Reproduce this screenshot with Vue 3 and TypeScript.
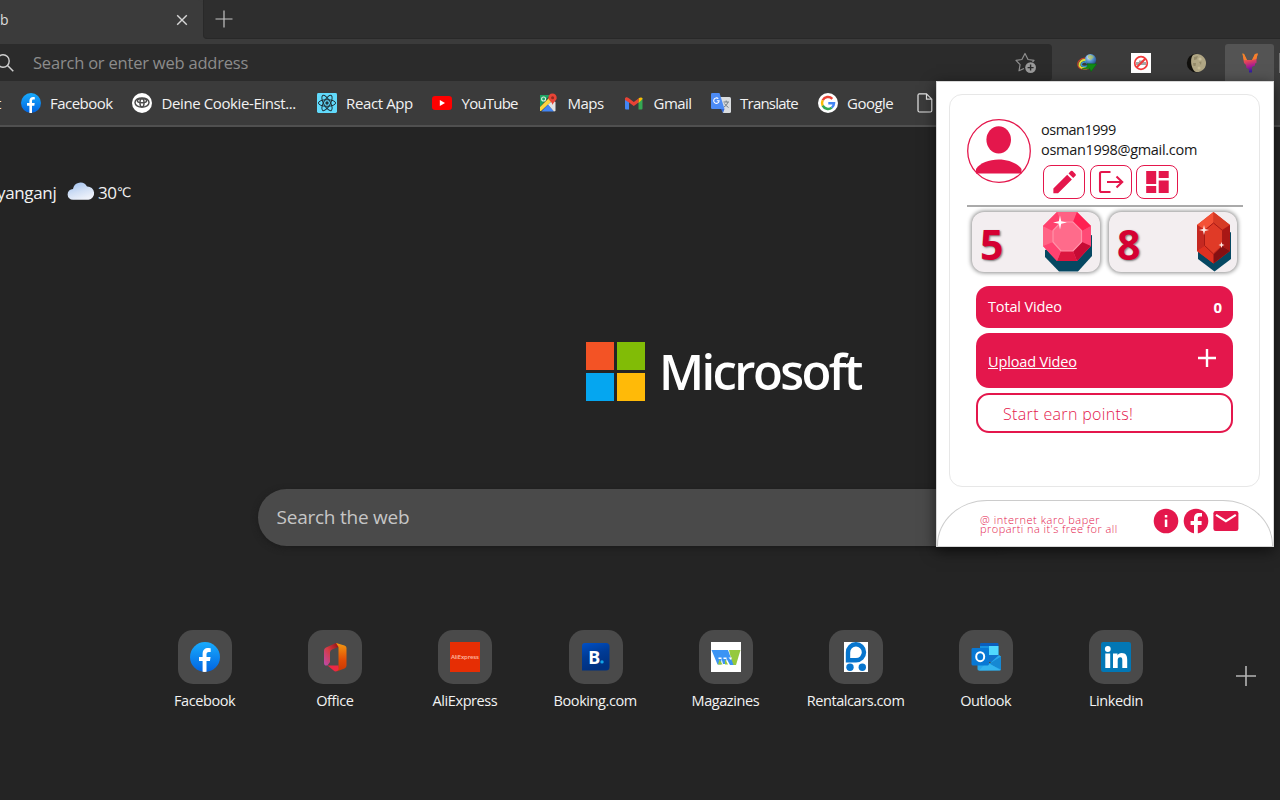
<script setup lang="ts">
interface Bookmark {
  label: string
  icon: string
}

const bookmarks: Bookmark[] = [
  { label: 'Facebook', icon: 'facebook' },
  { label: 'Deine Cookie-Einst...', icon: 'toyota' },
  { label: 'React App', icon: 'react' },
  { label: 'YouTube', icon: 'youtube' },
  { label: 'Maps', icon: 'maps' },
  { label: 'Gmail', icon: 'gmail' },
  { label: 'Translate', icon: 'translate' },
  { label: 'Google', icon: 'google' },
]

const tiles: Bookmark[] = [
  { label: 'Facebook', icon: 'facebook' },
  { label: 'Office', icon: 'office' },
  { label: 'AliExpress', icon: 'aliexpress' },
  { label: 'Booking.com', icon: 'booking' },
  { label: 'Magazines', icon: 'magazines' },
  { label: 'Rentalcars.com', icon: 'rental' },
  { label: 'Outlook', icon: 'outlook' },
  { label: 'Linkedin', icon: 'linkedin' },
]
</script>

<template>
  <div class="screen">
    <header class="browser">
      <div class="tabs">
        <div class="tab">
          <span class="tab-title">b</span>
          <svg class="close" width="12" height="12" viewBox="0 0 12 12"><path d="M1.2 1.2 10.8 10.8M10.8 1.2 1.2 10.8" stroke="#d6d6d6" stroke-width="1.4" fill="none" /></svg>
        </div>
        <div class="strip">
          <svg width="18" height="18" viewBox="0 0 18 18"><path d="M9 0.5V17.5M0.5 9H17.5" stroke="#c4c4c4" stroke-width="1.2" fill="none" /></svg>
        </div>
      </div>
      <div class="toolbar">
        <div class="address">
          <svg class="loupe" width="18" height="20" viewBox="0 0 18 20"><circle cx="7" cy="8" r="6.2" fill="none" stroke="#d0d0d0" stroke-width="1.4" /><path d="M11.5 12.5 17.3 18.2" stroke="#d0d0d0" stroke-width="1.5" /></svg>
          <span class="address-text">Search or enter web address</span>
          <svg class="star" width="22" height="22" viewBox="0 0 22 22"><path d="M9 16.5 4 18.8 5.1 12.6 1 8.4 6.9 7.5 10 1.5 13 7.5 19 8.4 17.5 10" fill="none" stroke="#8f8f8f" stroke-width="1.2" stroke-linejoin="round" /><circle cx="15.6" cy="15.6" r="5.4" fill="#9a9a9a" /><path d="M15.6 12.6V18.6M12.6 15.6H18.6" stroke="#2b2b2b" stroke-width="1.4" /></svg>
        </div>
        <div class="extensions">
          <div class="ext">
            <svg width="20" height="20" viewBox="0 0 20 20">
              <defs><radialGradient id="globe" cx=".4" cy=".3" r=".8"><stop offset="0" stop-color="#e9f6ff" /><stop offset=".4" stop-color="#5a97d4" /><stop offset="1" stop-color="#153b77" /></radialGradient></defs>
              <circle cx="13.4" cy="6.8" r="5.8" fill="url(#globe)" />
              <path d="M11 2.5Q15 1 17 4L14 7 11 5Z" fill="#a9bd57" opacity=".7" />
              <path d="M8 5.2C3 5.500 0 9 1 12.500 2 16 7 17 12 15.500" fill="none" stroke="#c7412a" stroke-width="1.2" />
              <path d="M8.500 6.8C4.5 7 2 9.500 2.500 12.500 3.5 15 7 16 12 14.5" fill="none" stroke="#d8e03a" stroke-width="2" />
              <path d="M9 8.8C5 9 3.800 10.800 4.600 12.5 6 14 9 13.500 12 12.500" fill="none" stroke="#3a9ad0" stroke-width="1.4" />
              <path d="M10 10.800 19.800 11 14.2 18.500 12.5 15.500 5 16Q9.500 15 10.800 13Z" fill="#118a15" stroke="#0a6a10" stroke-width=".6" />
            </svg>
          </div>
          <div class="ext">
            <svg width="20" height="20" viewBox="0 0 20 20"><path d="M0 0H20V20H0Z" fill="#fff" /><path d="M5 9H8V7.500H13V9H15V12H5Z" fill="#a5a5a5" /><circle cx="10" cy="10" r="6.3" fill="none" stroke="#f13a3a" stroke-width="1.7" /><path d="M14.5 5.5 5.5 14.5" stroke="#f13a3a" stroke-width="1.9" /></svg>
          </div>
          <div class="ext">
            <svg width="20" height="20" viewBox="0 0 20 20"><circle cx="10" cy="10" r="9.2" fill="#100f0c" /><path d="M7 2A9 9 0 1 1 10 19C5 16.500 3.500 6 7 2Z" fill="#b0a684" /><path d="M8 4 12 3 10.500 6.500 8 7ZM7 10 10 10 9.500 13 7.500 13ZM13 9 15.500 8.500 15 12Z" fill="#938969" /><circle cx="14" cy="6" r="1.6" fill="#c9bf9b" /><circle cx="13" cy="15" r="1.5" fill="#c7bc97" /></svg>
          </div>
          <div class="ext selected">
            <svg width="18" height="22" viewBox="0 0 18 22">
              <defs><linearGradient id="fox" x1="0" y1="0" x2=".2" y2="1"><stop offset="0" stop-color="#ffa51c" /><stop offset=".45" stop-color="#e44756" /><stop offset=".75" stop-color="#a61b93" /><stop offset="1" stop-color="#35209c" /></linearGradient></defs>
              <path d="M1.500 1.500 3 2 6 8 11 8 14 2 16.800 1.500 15.500 7 15.500 11 14 11.500 14 13.500 11 15 11 20.500 8 20.500 8 17.500 5.500 16 5 13 3 11Z" fill="url(#fox)" />
              <path d="M1.500 1.500 3 2 6 8 3 8ZM16.800 1.500 14 2 11 8 15.300 7Z" fill="#f5802b" />
            </svg>
          </div>
          <span class="divider" />
        </div>
      </div>
      <nav class="bookmarks">
        <span class="cut">t</span>
        <div v-for="b in bookmarks" :key="b.label" class="bookmark" :class="'bm-' + b.icon">
          <svg v-if="b.icon === 'facebook'" class="fav" viewBox="0 0 20 20">
            <defs><linearGradient id="fb" x1="0" y1="0" x2="0" y2="1"><stop stop-color="#18acfe" /><stop offset="1" stop-color="#0163e0" /></linearGradient></defs>
            <circle cx="10" cy="10" r="10" fill="url(#fb)" /><path d="M8.4 19.9V12.7H6V10H8.4V8.1C8.4 5.2 10 4 12.1 4 13 4 13.8 4.2 13.8 4.2V6.6H12.5C11.4 6.6 11 7.3 11 8.1V10H13.7L13.3 12.7H11V19.9Q9.7 20.1 8.4 19.9" fill="#fff" />
          </svg>
          <svg v-else-if="b.icon === 'toyota'" class="fav" viewBox="0 0 20 20"><circle cx="10" cy="10" r="10" fill="#fff" /><g fill="none" stroke="#4c4c4c" stroke-width="1.5"><ellipse cx="10" cy="9.500" rx="7" ry="4.600" /><ellipse cx="10" cy="7.800" rx="4.600" ry="2" /><ellipse cx="10" cy="9.800" rx="2" ry="4.200" /></g></svg>
          <svg v-else-if="b.icon === 'react'" class="fav" viewBox="0 0 20 20"><rect width="20" height="20" rx="1.4" fill="#61dafb" /><g fill="none" stroke="#20333b" stroke-width="1"><ellipse cx="10" cy="10" rx="8.6" ry="3.3" /><ellipse cx="10" cy="10" rx="8.6" ry="3.3" transform="rotate(60 10 10)" /><ellipse cx="10" cy="10" rx="8.6" ry="3.3" transform="rotate(120 10 10)" /></g><circle cx="10" cy="10" r="1.7" fill="#20333b" /></svg>
          <svg v-else-if="b.icon === 'youtube'" class="fav" viewBox="0 0 20 20"><rect x="0" y="3" width="20" height="14" rx="3.2" fill="#f00" /><path d="M7.8 7 13 10 7.8 13Z" fill="#fff" /></svg>
          <svg v-else-if="b.icon === 'maps'" class="fav" viewBox="0 0 20 20">
            <path d="M2 2H12L2 14Z" fill="#1ca261" /><path d="M2 14 12 4 15 7 3 18H2Z" fill="#fcd63f" /><path d="M3.5 18.5 10 11.6 16 18.5Z" fill="#4285f4" /><path d="M10 11.5 15 7.2 17.5 9V18L16 18.5Z" fill="#e4e4e4" /><circle cx="5.6" cy="6" r="2" fill="none" stroke="#d9f0e2" stroke-width="1.1" /><path d="M14.5 .5A4.3 4.3 0 0 1 18.7 5C18.7 7.5 15.2 9 14.7 12 14.2 9 10.4 7.5 10.4 4.8A4.3 4.3 0 0 1 14.5 .5Z" fill="#e84436" /><circle cx="14.6" cy="4.8" r="1.5" fill="#942a22" />
          </svg>
          <svg v-else-if="b.icon === 'gmail'" class="fav" viewBox="0 0 20 20"><path d="M1 5 5 8V16.5H2Q1 16.500 1 15.500Z" fill="#4285f4" /><path d="M14.500 8 18.500 5V15.500Q18.500 16.500 17.500 16.500H14.500Z" fill="#34a853" /><path d="M14.500 5.500C16 4 18.500 4 18.500 6L14.500 10Z" fill="#fbbc04" /><path d="M1 6C1 4 3 3.500 4.500 5L9.800 9 14.500 5.500V9.500L9.800 13 5 9.500 1 7Z" fill="#ea4335" /></svg>
          <svg v-else-if="b.icon === 'translate'" class="fav" viewBox="0 0 20 20"><path d="M8 4H18.500Q20 4 20 5.500V18.500Q20 20 18.500 20H12Z" fill="#d9dcdf" /><path d="M1.300 0H8.500L13.500 16H1.300Q0 16 0 14.700V1.300Q0 0 1.300 0Z" fill="#4c8bf5" /><path d="M10 16H13.500L12 20Z" fill="#3367d6" /><path d="M5.800 7.800H8.100A2.700 2.700 0 1 1 7.300 5.700" fill="none" stroke="#fff" stroke-width="1.100" /><path d="M12.500 9H18M15.200 7.500V9M17 9Q16 12.500 13 14M13.500 10.500Q15 13 17.500 14.500" fill="none" stroke="#758087" stroke-width="1" /></svg>
          <svg v-else class="fav" viewBox="0 0 20 20"><circle cx="10" cy="10" r="10" fill="#fff" /><g fill="none" stroke-width="2.500"><path d="M4.700 7.300A6 6 0 0 1 14.300 5.800" stroke="#ea4335" /><path d="M4.700 7.300A6 6 0 0 0 4.700 12.700" stroke="#fbbc05" /><path d="M4.700 12.700A6 6 0 0 0 13.800 14.600" stroke="#34a853" /><path d="M13.800 14.600A6 6 0 0 0 16 10.200H10.300" stroke="#4285f4" /></g></svg>
          <span class="bm-label">{{ b.label }}</span>
        </div>
        <svg class="page-icon" width="16" height="20" viewBox="0 0 16 20"><path d="M2.500 .8H9.500L14.800 6.200V17.500Q14.800 19 13.300 19H2.500Q1 19 1 17.500V2.300Q1 .8 2.500 .8ZM9.500 .8V6.200H14.800" fill="none" stroke="#e6e6e6" stroke-width="1.200" /></svg>
      </nav>
    </header>

    <main class="page">
      <div class="weather">
        <span class="town">yanganj</span>
        <svg width="28" height="20" viewBox="0 0 28 20"><defs><linearGradient id="cloud" x1="0" y1="0" x2=".5" y2="1"><stop stop-color="#9dbff0" /><stop offset=".6" stop-color="#d2e0f5" /><stop offset="1" stop-color="#edf1fa" /></linearGradient></defs><path d="M6 18.800A5.400 5.400 0 0 1 6 8 7.500 7.500 0 0 1 20 5.500 6.700 6.700 0 0 1 21.500 18.800Z" fill="url(#cloud)" /></svg>
        <span class="temp">30<span class="unit">℃</span></span>
      </div>

      <div class="brand">
        <div class="squares"><i class="sq red" /><i class="sq green" /><i class="sq blue" /><i class="sq yellow" /></div>
        <span class="brand-name">Microsoft</span>
      </div>

      <div class="search"><span>Search the web</span></div>

      <div class="tiles">
        <div v-for="t in tiles" :key="t.label" class="tile">
          <div class="tile-box">
            <svg v-if="t.icon === 'facebook'" width="30" height="30" viewBox="0 0 20 20"><circle cx="10" cy="10" r="10" fill="url(#fb)" /><path d="M8.400 19.900V12.700H6V10H8.400V8.100C8.400 5.200 10 4 12.100 4 13 4 13.800 4.200 13.800 4.200V6.600H12.500C11.400 6.600 11 7.300 11 8.100V10H13.700L13.300 12.700H11V19.900Q9.700 20.100 8.400 19.900" fill="#fff" /></svg>
            <svg v-else-if="t.icon === 'office'" width="30" height="30" viewBox="0 0 30 30">
              <defs><linearGradient id="o1" x1="1" y1="0" x2="0" y2="1"><stop stop-color="#8c0f12" /><stop offset=".5" stop-color="#d63b43" /><stop offset="1" stop-color="#b94bb0" /></linearGradient><linearGradient id="o2" x1="0" y1="0" x2="0" y2="1"><stop stop-color="#f39a12" /><stop offset=".6" stop-color="#e04b05" /><stop offset="1" stop-color="#c93704" /></linearGradient></defs>
              <path d="M16 1 18.500 1.800V5L12 7.500Q10 8.500 10 10.500V20L7.500 23.500Q4 24 4 21V8.500Q4 6.500 6 5.500Z" fill="url(#o1)" /><path d="M16 1 24.500 3.500Q26.500 4.200 26.500 6V23.500Q26.500 25.500 24.500 26.500L16.500 29.500 18.500 25V5Z" fill="url(#o2)" /><path d="M7.500 23.500H18.500V27.500Q17 30 14.500 29.300Z" fill="#eb2843" />
            </svg>
            <svg v-else-if="t.icon === 'aliexpress'" width="30" height="30" viewBox="0 0 30 30"><path d="M0 0H30V30H0Z" fill="#e62e04" /><text x="15" y="17" text-anchor="middle" font-family="Open Sans" font-size="6" font-weight="600" textLength="28" fill="#ffb9a2">AliExpress</text></svg>
            <svg v-else-if="t.icon === 'booking'" width="30" height="30" viewBox="0 0 30 30"><defs><linearGradient id="bk" x1="0" y1="0" x2=".3" y2="1"><stop stop-color="#0050c7" /><stop offset=".5" stop-color="#003b95" /><stop offset="1" stop-color="#00307f" /></linearGradient></defs><path d="M4 1H25Q28.500 1 28.500 4.500V25Q28.500 28.500 25 28.500H1V4Q1 1 4 1Z" fill="url(#bk)" /><text x="7.200" y="21.500" font-family="Noto Sans" font-weight="700" font-size="18" fill="#fff">B</text><circle cx="21" cy="19.900" r="1.700" fill="#12a5e8" /></svg>
            <svg v-else-if="t.icon === 'magazines'" width="30" height="30" viewBox="0 0 30 30"><path d="M0 0H30V30H0Z" fill="#fff" /><path d="M18 8H29.500L25 23H21.500Z" fill="#95c93d" /><path d="M.5 8H17L22.500 23H19L15.500 16.500 15 22H12L10.500 16.500 10 22.500H6.500Z" fill="#3b94f4" /><path d="M8.500 17.500 11.500 22.500H7ZM14 17 17 22.500H14Z" fill="#95c93d" /><path d="M7.500 15.500H10.500V17H7.500ZM12.500 15.500H15.500V17H12.500ZM17.500 15.500H21L20 18Z" fill="#fff" /></svg>
            <svg v-else-if="t.icon === 'rental'" width="30" height="30" viewBox="0 0 30 30"><path d="M3 0H27V30H3Z" fill="#fff" /><path d="M7 18.300V10.500A8 8 0 1 1 15 18.300Z" fill="none" stroke="#0775cd" stroke-width="4.400" /><circle cx="9" cy="25.300" r="3.700" fill="#0775cd" /><circle cx="21.300" cy="25.300" r="3.700" fill="#0775cd" /></svg>
            <svg v-else-if="t.icon === 'outlook'" width="30" height="30" viewBox="0 0 30 30"><path d="M9 2Q9 1 10 1H26.500Q27.500 1 27.500 2V17H9Z" fill="#0a5ebd" /><path d="M9 4H18V13H9Z" fill="#1590df" /><path d="M18 4H27.500V13H18Z" fill="#50d9ff" /><path d="M9 13H27.500V20H9Z" fill="#1273cb" /><path d="M28 13 30 14.500V27Q30 28.500 28.500 28.500H8Q6.500 28.500 6.500 27V17L18 22Z" fill="#28a8ea" /><path d="M18 22 30 14.500V27.500Z" fill="#1688d3" /><path d="M16 20 29.500 28.300 8 28.500Z" fill="#34b4ee" /><rect x=".5" y="6" width="17.500" height="17.500" rx="1.400" fill="#0878d4" /><ellipse cx="9.200" cy="14.700" rx="4" ry="4.500" fill="none" stroke="#fff" stroke-width="2" /></svg>
            <svg v-else width="30" height="30" viewBox="0 0 30 30"><rect width="30" height="30" rx="2.200" fill="#0277b5" /><circle cx="6.800" cy="7" r="2.900" fill="#fff" /><path d="M4.300 11.500H9.200V26H4.300ZM12 11.500H16.500V13.500C17 12.200 18.500 11.100 20.700 11.100 25.100 11.100 26.200 14 26.200 17.800V26H21.300V18.700C21.300 17 21.300 15.200 19.200 15.200S16.700 16.700 16.700 18.600V26H12Z" fill="#fff" /></svg>
          </div>
          <span class="tile-label">{{ t.label }}</span>
        </div>
        <svg class="add" width="20" height="20" viewBox="0 0 20 20"><path d="M10 0V20M0 10H20" stroke="#b4b4b4" stroke-width="1.600" /></svg>
      </div>
    </main>

    <aside class="popup">
      <section class="card">
        <div class="profile">
          <svg width="64" height="64" viewBox="0 0 64 64"><circle cx="32" cy="32" r="31.300" fill="#fff" stroke="#e4174c" stroke-width="1.300" /><ellipse cx="31.700" cy="20.800" rx="12.300" ry="13.600" fill="#e4174c" /><path d="M9 54.500V50C13 44 22 40.500 31.700 40.500S50 44 54.500 50V54.500Z" fill="#e4174c" /></svg>
          <div class="who">
            <span class="line user">osman1999</span>
            <span class="line mail">osman1998@gmail.com</span>
            <div class="actions">
              <span class="act"><svg width="30" height="30" viewBox="-.5 0 24 24"><path d="M3 17.250V21h3.750L17.810 9.940l-3.750-3.750L3 17.250zM20.710 7.040a1 1 0 0 0 0-1.410l-2.340-2.340a1 1 0 0 0-1.410 0l-1.830 1.830 3.750 3.750 1.830-1.830z" fill="#e4174c" /></svg></span>
              <span class="act"><svg width="26" height="24" viewBox="0 0 26 24"><path d="M12.500 2H3.500Q2 2 2 3.500V20.500Q2 22 3.500 22H12.500M9 12H24M18.500 6.500 24.200 12 18.500 17.500" fill="none" stroke="#e4174c" stroke-width="2.100" /></svg></span>
              <span class="act"><svg width="24" height="24" viewBox="-.700 0 24 24"><path d="M.5 1H10.500V14H.5ZM.5 16H10.500V23H.5ZM13 1H23V8H13ZM13 10.500H23V23H13Z" fill="#e4174c" /></svg></span>
            </div>
          </div>
        </div>
        <div class="rule" />
        <div class="gems">
          <div class="gem">
            <span class="count">5</span>
            <svg width="50" height="60" viewBox="0 0 50 60">
              <path d="M2 38 49 23V44L35 59.500H16L2 45Z" fill="#064862" />
              <path d="M14 0H34L48 14V34L34 49H14L0 34V14Z" fill="#ff4f79" />
              <path d="M14 0H34L30 10H18Z" fill="#ff6184" /><path d="M34 0 48 14 39 19 30 10Z" fill="#ff2152" /><path d="M48 14V34L39 30V19Z" fill="#ff4a76" /><path d="M48 34 34 49 30 39 39 30Z" fill="#c60a34" /><path d="M34 49H14L18 39H30Z" fill="#dc163f" /><path d="M14 49 0 34 10 30 18 39Z" fill="#ff4270" /><path d="M0 34V14L10 19V30Z" fill="#ff6485" /><path d="M14 0 0 14 10 19 18 10Z" fill="#ff426e" />
              <path d="M18 10H30L38.500 18.500V30L30 39H18L10 30V18.500Z" fill="#ff6b8b" stroke="#ff91a8" stroke-width="1.200" />
              <path d="M17 3.500 18.200 9.300 24 10.500 18.200 11.700 17 17.500 15.800 11.700 10 10.500 15.800 9.300Z" fill="#fff" />
            </svg>
          </div>
          <div class="gem second">
            <span class="count">8</span>
            <svg width="36" height="60" viewBox="0 0 36 60">
              <path d="M2 36 35 20V47L18.500 59.500 2 47Z" fill="#064862" />
              <path d="M17.500 0 34 13V39L17.500 51.500 1 39V13Z" fill="#d93725" />
              <path d="M17.500 0 1 13 10 18 17.500 11Z" fill="#f45136" /><path d="M17.500 0 34 13 26 18 17.500 11Z" fill="#d63a25" /><path d="M1 13V39L9 34V18Z" fill="#c52821" /><path d="M34 13V39L26 34V18Z" fill="#a91715" /><path d="M1 39 17.500 51.500V42L9 34Z" fill="#df3021" /><path d="M34 39 17.500 51.500V42L26 34Z" fill="#850f12" />
              <path d="M17.500 11 26.500 18.500V33.500L17.500 42 8.500 33.500V18.500Z" fill="#e03a27" stroke="#a71a16" stroke-width="1" />
              <path d="M8 13 9 17 13 18 9 19 8 23 7 19 3 18 7 17ZM25.500 30 26.300 32.200 28.500 33 26.300 33.800 25.500 36 24.700 33.800 22.500 33 24.700 32.200Z" fill="#ffe9e4" />
            </svg>
          </div>
        </div>
        <div class="bar total"><span class="bar-label total-label">Total Video</span><b class="zero">0</b></div>
        <div class="bar upload"><span class="bar-label upload-label">Upload Video</span><svg width="18" height="18" viewBox="0 0 18 18"><path d="M9 0V18M0 9H18" stroke="#fff" stroke-width="2.400" /></svg></div>
        <div class="bar earn"><span class="earn-label">Start earn points!</span></div>
      </section>
      <footer class="foot">
        <p class="note"><span class="note-a">@ internet karo baper</span><br /><span class="note-b">proparti na it's free for all</span></p>
        <div class="links">
          <svg width="26" height="26" viewBox="0 0 26 26"><circle cx="13" cy="13" r="12.300" fill="#e4174c" /><path d="M11.800 7H14.300V9.500H11.800ZM11.800 11.500H14.300V19H11.800Z" fill="#fff" /></svg>
          <svg width="26" height="26" viewBox="0 0 26 26"><circle cx="13" cy="13" r="12.300" fill="#e4174c" /><path d="M11 26V17H7.600V13H11V10.500C11 6.800 13 5 16 5H19V8.500H17C15.300 8.500 14.800 9.400 14.800 10.700V13H18.600V17H14.800V26Z" fill="#fff" /></svg>
          <svg width="26" height="26" viewBox="0 0 26 26"><rect x=".4" y="3" width="25" height="20" rx="2.300" fill="#e4174c" /><path d="M3 6.800 12.900 13.200 22.800 6.800" fill="none" stroke="#fff" stroke-width="2.200" /></svg>
        </div>
      </footer>
    </aside>
  </div>
</template>

<style>
body { background: #242424; }
</style>

<style scoped>
* { box-sizing: border-box; }
.screen { position: relative; width: 1280px; height: 800px; overflow: hidden; background: #242424; color: #f2f2f2; font-family: "Open Sans", "Noto Sans", sans-serif; white-space: nowrap; }
svg { display: block; flex: none; }
.browser { height: 127px; background: #3b3b3b; border-bottom: 2px solid #505050; }
.tabs { display: flex; height: 44px; }
.tab { display: flex; align-items: center; width: 203px; height: 39px; background: #3b3b3b; border-radius: 0 5px 0 0; }
.tab-title { flex: 1; font-size: 14px; color: #ddd; }
.close { margin-right: 15px; margin-top: 1px; }
.strip { flex: 1; height: 39px; background: #2e2e2e; border-bottom-left-radius: 4px; border-bottom: 1px solid #282828; border-left: 1px solid #292929; padding: 10px 0 0 11px; }
.toolbar { display: flex; height: 37px; }
.address { display: flex; align-items: center; width: 1052px; background: #2b2b2b; border-radius: 0 4px 4px 0; }
.loupe { margin-left: -4px; }
.address-text { flex: 1; margin-left: 19px; color: #8c8c8c; font-size: 16.500px; letter-spacing: -0.2px; }
.star { margin-right: 15px; }
.extensions { display: flex; align-items: center; padding-left: 10px; }
.ext { display: flex; align-items: center; justify-content: center; width: 49px; height: 37px; margin-right: 5.500px; }
.selected { background: #545454; border-radius: 3px 3px 0 0; margin: 0 5px 0 -.500px; }
.divider { width: 1px; height: 20px; background: #777; }
.bookmarks { display: flex; align-items: center; height: 44px; }
.cut { width: 20.600px; margin-left: -4px; margin-right: 4px; font-size: 15px; }
.bookmark { display: flex; align-items: center; gap: 9.500px; }
.fav { width: 20px; height: 20px; }
.bm-label { font-size: 15px; font-weight: 500; letter-spacing: -0.550px; margin-top: -1px; }
.bm-facebook { width: 111.500px; }
.bm-toyota { width: 184.500px; }
.bm-toyota .bm-label { letter-spacing: -.400px; }
.bm-react { width: 115.500px; }
.bm-react .bm-label { letter-spacing: -.400px; }
.bm-youtube { width: 106px; }
.bm-youtube .bm-label { letter-spacing: -.800px; }
.bm-maps { width: 86px; }
.bm-gmail { width: 86.500px; }
.bm-translate { width: 107px; }
.bm-translate .bm-label { letter-spacing: -.800px; }
.bm-google { width: 99px; }
.weather { display: flex; align-items: center; height: 24px; margin-top: 54px; font-size: 17px; font-weight: 500; }
.weather svg { margin-top: -4px; }
.town { width: 67px; margin: -1px 3px 0 -3px; letter-spacing: -.350px; }
.temp { margin: -1px 0 0 3px; letter-spacing: -.4px; }
.unit { font-size: 13px; font-family: "DejaVu Sans", sans-serif; vertical-align: 2px; }
.brand { display: flex; align-items: center; height: 60px; margin: 136px 0 0 585.500px; }
.squares { display: grid; grid-template-columns: 28.500px 28.500px; grid-template-rows: 28.500px 28.500px; gap: 2.500px; margin-top: .5px; }
.red { background: #f35325; } .green { background: #81bc06; } .blue { background: #05a6f0; } .yellow { background: #ffba08; }
.brand-name { margin: -1px 0 0 14px; font-size: 49px; font-weight: 600; line-height: 60px; letter-spacing: -2.600px; color: #fff; }
.search { display: flex; align-items: center; width: 764px; height: 57px; margin: 88px 0 0 258px; padding: 0 0 1px 18.500px; border-radius: 29px; background: #4a4a4a; color: #c6c6c6; font-size: 19px; letter-spacing: -.230px; box-shadow: 0 2px 6px #1c1c1c; }
.tiles { display: flex; margin: 84.400px 0 0 140px; }
.tile { width: 130.200px; display: flex; flex-direction: column; align-items: center; }
.tile-box { width: 54px; height: 54px; border-radius: 15px; background: #4a4a4a; display: flex; align-items: center; justify-content: center; }
.tile-label { margin: 7px 1px 0 0; font-size: 14.500px; line-height: 20px; font-weight: 500; letter-spacing: -.420px; }
.add { margin: 35.600px 0 0 54px; }
.popup { position: absolute; left: 936px; top: 81px; width: 338px; height: 466px; background: #fff; border: 1px solid #d8d8d8; box-shadow: 0 4px 14px rgba(0,0,0,.6); color: #171717; padding: 12px 13px 0 12px; }
.card { height: 393px; border: 1.500px solid #e7e7e7; border-radius: 13px; padding: 24px 16px 0 17px; }
.profile { display: flex; height: 86px; }
.who { margin: 1px 0 0 10px; }
.line { display: block; font-size: 14.500px; line-height: 20px; }
.user { letter-spacing: -.5px; }
.mail { letter-spacing: -.3px; }
.actions { display: flex; gap: 4.500px; margin: 5px 0 0 2px; }
.act { display: flex; align-items: center; justify-content: center; width: 42px; height: 34px; border: 1.400px solid #e4174c; border-radius: 8px; }
.rule { height: 2px; background: #aaa; }
.gems { display: flex; gap: 9px; margin: 5px 0 0 5px; }
.gem { display: flex; align-items: center; justify-content: space-between; width: 128px; height: 60px; border-radius: 12px; background: #f3eef0; box-shadow: 0 0 4px 1px rgba(0,0,0,.45); padding: 0 7px 0 8px; flex: none; }
.second { padding-right: 5px; }
.count { font-family: "Noto Sans", "Open Sans", sans-serif; font-size: 41px; line-height: 60px; margin-top: 3px; font-weight: 700; color: #d50032; text-shadow: 1px 1px 2px #777; }
.bar { display: flex; align-items: center; justify-content: space-between; width: 257px; margin-left: 9px; border-radius: 13px; background: #e4174c; color: #fff; padding: 0 11px 0 12px; }
.total { height: 41.500px; margin-top: 14px; }
.upload { height: 55.500px; margin-top: 5px; padding: 3px 17px 0 12px; }
.upload svg { margin-top: -7px; }
.earn { height: 40px; margin-top: 5px; border: 2.500px solid #e4174c; background: #fff; color: #e4174c; padding: 0 25px; }
.bar-label { font-size: 14.500px; letter-spacing: -.15px; }
.upload-label { text-decoration: underline; }
.zero { font-size: 15px; }
.earn-label { font-size: 16px; font-weight: 300; letter-spacing: .350px; padding-top: 2px; }
.foot { display: flex; height: 46px; margin: 13px -13px 0 -12px; border: 1px solid #ccc; border-bottom: 0; border-radius: 50px 50px 0 0 / 45px 45px 0 0; color: #e4174c; padding: 0 0 0 42px; }
.note { width: 172.500px; margin: 14px 0 0; font-size: 11px; line-height: 9px; font-weight: 300; letter-spacing: .450px; }
.note-a { letter-spacing: .550px; }
.links { display: flex; gap: 4px; padding-top: 7px; }
</style>
